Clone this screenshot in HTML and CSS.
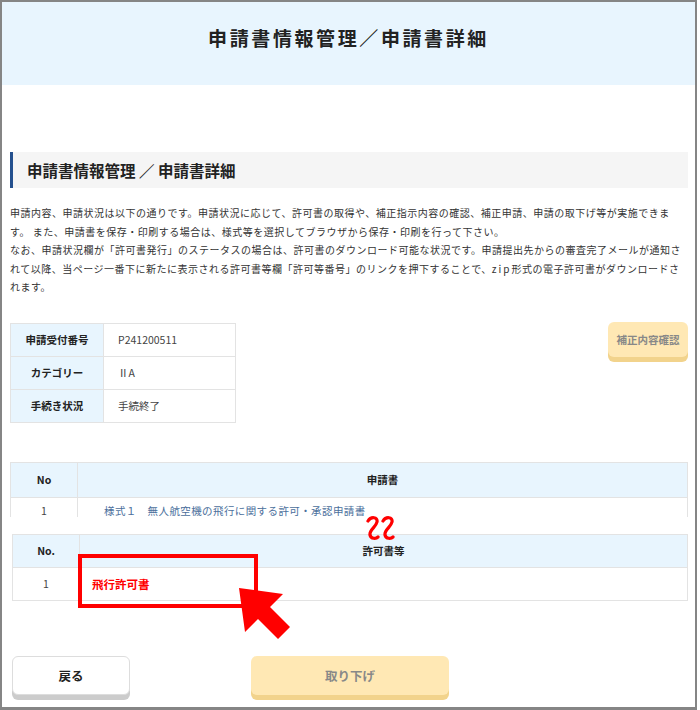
FILE: index.html
```html
<!DOCTYPE html>
<html lang="ja">
    <head>
        <meta charset="UTF-8">
        <meta name="viewport" content="width=device-width, initial-scale=1.0">
        <title>申請書詳細</title>
        <link rel="stylesheet" href="styles.css">
    </head>

    <body>
        <div class="frame">
            <header class="page-head">
                <h1>申請書情報管理／申請書詳細</h1>
            </header>

            <main class="content">
                <h2 class="section-title">申請書情報管理 ／ 申請書詳細</h2>

                <p class="lead">申請内容、申請状況は以下の通りです。申請状況に応じて、許可書の取得や、補正指示内容の確認、補正申請、申請の取下げ等が実施できます。 また、申請書を保存・印刷する場合は、様式等を選択してブラウザから保存・印刷を行って下さい。<br>なお、申請状況欄が「許可書発行」のステータスの場合は、許可書のダウンロード可能な状況です。申請提出先からの審査完了メールが通知されて以降、当ページ一番下に新たに表示される許可書等欄「許可等番号」のリンクを押下することで、<span class="latin">zip</span>形式の電子許可書がダウンロードされます。</p>

                <div class="summary">
                    <table class="info">
                        <tr>
                            <th>申請受付番号</th>
                            <td>P241200511</td>
                        </tr>
                        <tr>
                            <th>カテゴリー</th>
                            <td>ⅡA</td>
                        </tr>
                        <tr>
                            <th>手続き状況</th>
                            <td>手続終了</td>
                        </tr>
                    </table>
                    <button class="btn btn-yellow btn-small">補正内容確認</button>
                </div>

                <div class="clip">
                    <table class="list">
                        <tr class="head-row">
                            <th class="col-no">No</th>
                            <th>申請書</th>
                        </tr>
                        <tr class="cut-row">
                            <td class="col-no">1</td>
                            <td class="doc-link">様式１　無人航空機の飛行に関する許可・承認申請書</td>
                        </tr>
                    </table>
                </div>

                <div class="permits">
                    <table class="list">
                        <tr>
                            <th class="col-no">No.</th>
                            <th>許可書等</th>
                        </tr>
                        <tr>
                            <td class="col-no">1</td>
                            <td class="permit-name">飛行許可書</td>
                        </tr>
                    </table>
                </div>

                <div class="actions">
                    <button class="btn btn-white">戻る</button>
                    <button class="btn btn-yellow btn-wide">取り下げ</button>
                </div>
            </main>

            <!-- annotation marks drawn over the screenshot -->
            <svg class="wave" width="32" height="26" viewBox="0 0 32 26">
                <path d="M3 5 C6 0 13 1 12 6 C11 11 4 14 5 19 C6 23 11 23 13 21" />
                <path d="M18 5 C21 0 28 1 27 6 C26 11 19 14 20 19 C21 23 26 23 28 21" />
            </svg>
            <div class="mark-box"></div>
            <svg class="arrow" width="60" height="60" viewBox="235 584 60 60">
                <polygon points="239,588 283,594 270,607 290,627 278,639 258,619 245,632" />
            </svg>
        </div>
    </body>
</html>
```

FILE: styles.css
```css
body {
    margin: 0;
    font-family: "Noto Sans CJK JP", "Noto Sans", sans-serif;
    color: #333;
    background: #fff;
}

.frame {
    position: relative;
    width: 697px;
    height: 710px;
    box-sizing: border-box;
    border: 2px solid #858585;
    border-bottom-width: 3px;
    overflow: hidden;
}

.page-head {
    height: 83px;
    background-color: #e8f5fe;
    padding-top: 22px;
    box-sizing: border-box;
}

.page-head h1 {
    margin: 0;
    text-align: center;
    font-size: 19px;
    line-height: 28px;
    letter-spacing: 2.6px;
    font-weight: bold;
    color: #222;
}

.content {
    padding: 0 7px 0 8px;
}

.section-title {
    margin: 67px 0 0;
    height: 36px;
    line-height: 36px;
    background-color: #f5f5f5;
    border-left: 3px solid #24508e;
    padding-left: 14px;
    font-size: 15.5px;
    font-weight: bold;
    color: #222;
}

.lead {
    margin: 16px 0 0;
    font-size: 10px;
    line-height: 18.5px;
    letter-spacing: 0.5px;
    color: #333;
}

.lead .latin {
    letter-spacing: 2px;
}

.summary {
    display: flex;
    justify-content: space-between;
    align-items: flex-start;
    margin-top: 26px;
}

.info {
    border-collapse: collapse;
    width: 226px;
    font-size: 10.5px;
}

.info th,
.info td {
    border: 1px solid #e3e3e3;
    height: 32px;
    padding: 0;
}

.info th {
    width: 92px;
    background-color: #e8f5fe;
    font-weight: bold;
    color: #222;
}

.info td {
    padding-left: 14px;
    color: #444;
}

.btn {
    font-family: inherit;
    font-weight: bold;
    border-radius: 6px;
    cursor: pointer;
}

.btn-yellow {
    background-color: #ffe8b4;
    border: none;
    box-shadow: 0 5px 0 #f2d38c;
    color: #888;
}

.btn-white {
    background-color: #fff;
    border: 1px solid #ddd;
    box-shadow: 0 5px 0 #ccc;
    color: #222;
}

.btn-small {
    width: 80px;
    height: 35px;
    margin-top: -1px;
    font-size: 10.5px;
    padding: 0;
}

.clip {
    margin-top: 39px;
    height: 55px;
    overflow: hidden;
}

.list {
    width: 100%;
    border-collapse: collapse;
    font-size: 10.5px;
}

.list th,
.list td {
    border: 1px solid #e3e3e3;
    height: 32px;
    padding: 0;
}

.list th {
    background-color: #e8f5fe;
    font-weight: bold;
    color: #222;
}

.list .head-row th {
    height: 34px;
}

.list .cut-row td {
    height: 27px;
    line-height: 1;
}

.list .col-no {
    width: 66px;
    text-align: center;
}

.list td.col-no {
    color: #444;
}

.doc-link {
    padding-left: 26px !important;
    color: #4b6f9c;
    letter-spacing: 0.4px;
}

.permits {
    margin: 17px 0 0 2px;
}

.permit-name {
    padding-left: 12px !important;
    color: #ff0000;
    font-weight: bold;
    font-size: 11.5px;
}

.actions {
    display: flex;
    gap: 121px;
    margin-top: 55px;
    padding-left: 2px;
}

.btn-white {
    width: 118px;
    height: 39px;
    font-size: 12.5px;
}

.btn-wide {
    width: 198px;
    height: 39px;
    font-size: 12.5px;
}

.wave {
    position: absolute;
    left: 363px;
    top: 514px;
}

.wave path {
    fill: none;
    stroke: #ff0000;
    stroke-width: 3.2;
    stroke-linecap: round;
}

.mark-box {
    position: absolute;
    left: 76px;
    top: 552px;
    width: 180px;
    height: 54px;
    box-sizing: border-box;
    border: 4px solid #ff0000;
}

.arrow {
    position: absolute;
    left: 233px;
    top: 582px;
}

.arrow polygon {
    fill: #ff0000;
}
```
